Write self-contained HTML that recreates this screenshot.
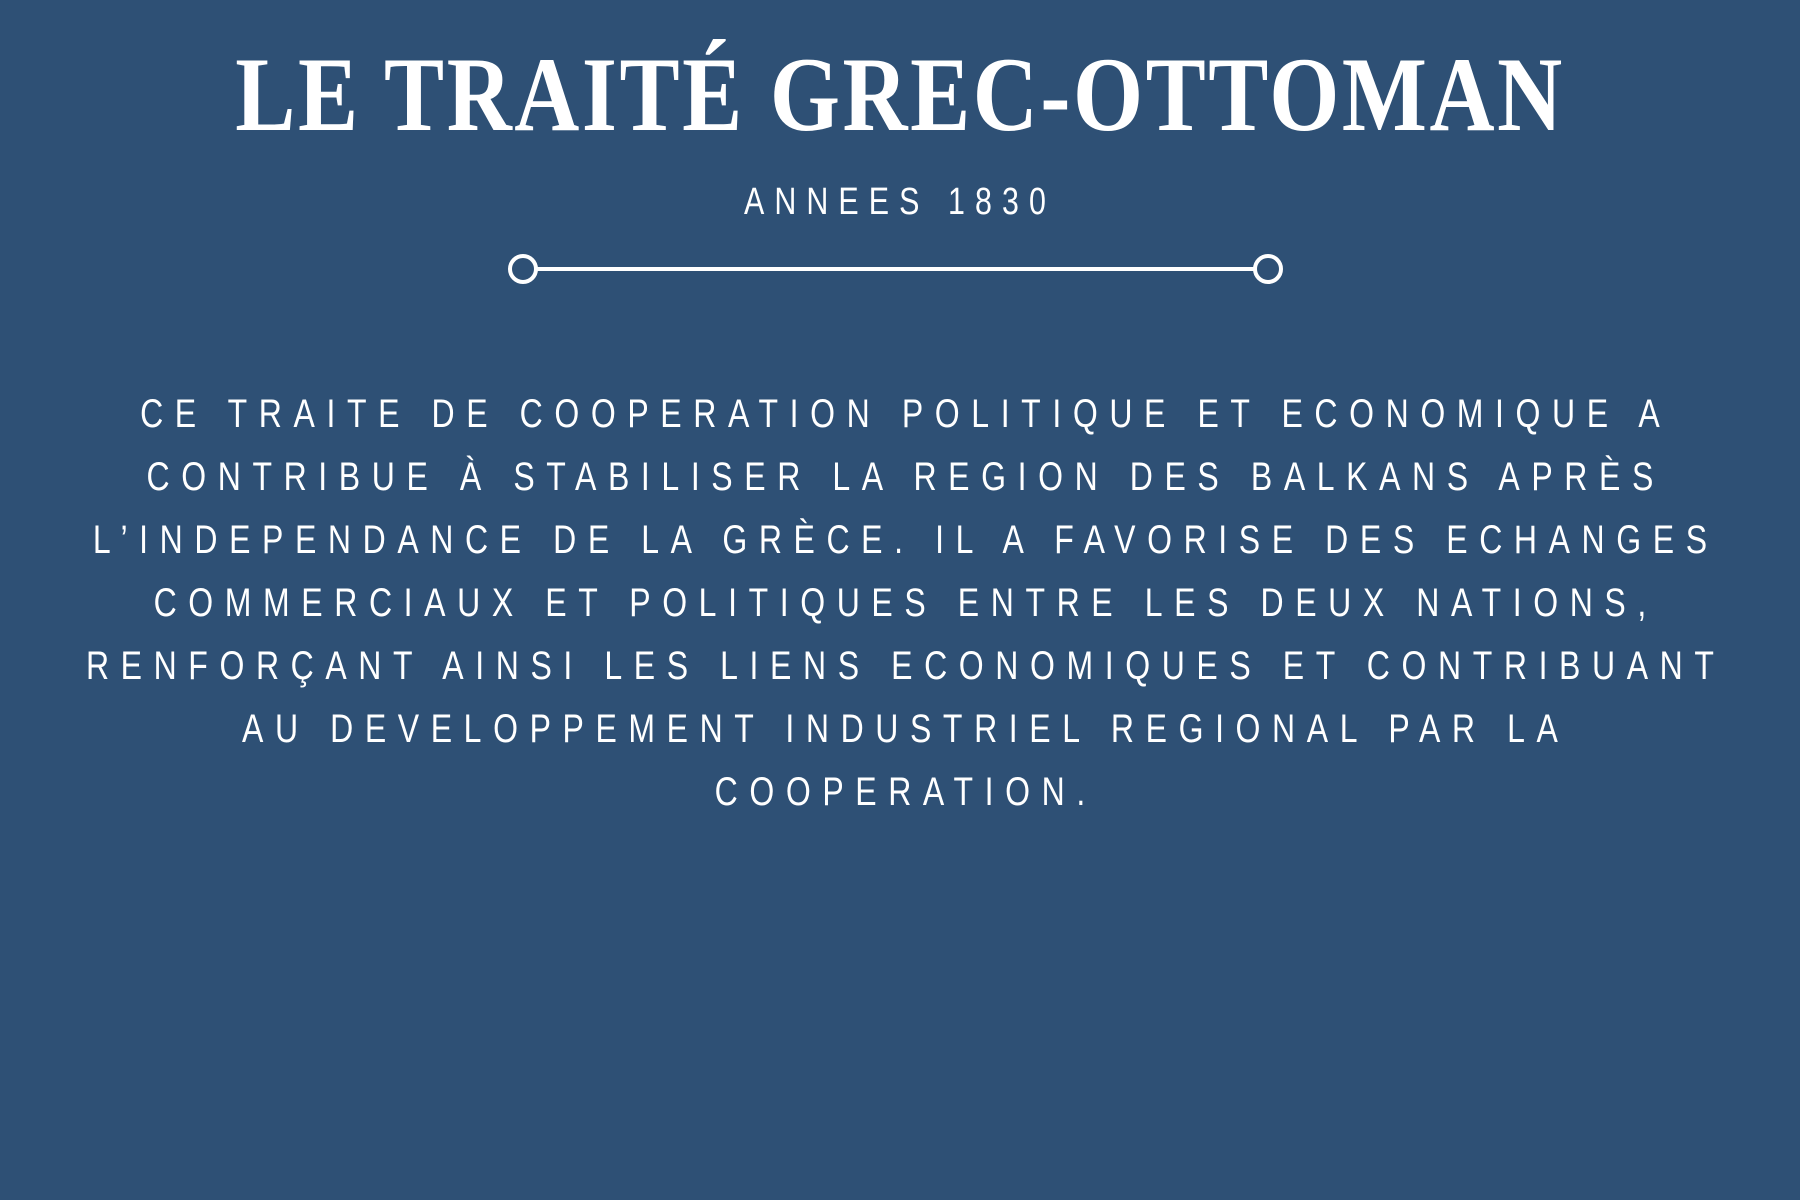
<!DOCTYPE html>
<html><head><meta charset="utf-8"><style>
html,body{margin:0;padding:0}
body{width:1800px;height:1200px;background:#2e5075;position:relative;overflow:hidden;color:#fff}
.t{position:absolute;left:-300px;width:2400px;text-align:center;white-space:nowrap}
#title{top:42px;font:bold 106px/106px "Liberation Serif",serif;}
#title span{display:inline-block;transform:scaleX(0.85);letter-spacing:3px}
#sub{top:183px;font:38px/38px "Liberation Sans",sans-serif}
#sub span{display:inline-block;transform:scaleX(0.8);letter-spacing:12.6px}
#body{top:383px;left:-294px;font:40px/63px "Liberation Sans",sans-serif}
#body .in{display:inline-block;transform:scaleX(0.8);letter-spacing:14.5px}
</style></head><body>
<div class="t" id="title"><span>LE TRAITÉ GREC-OTTOMAN</span></div>
<div class="t" id="sub"><span>ANNEES 1830</span></div>
<svg style="position:absolute;left:0;top:0" width="1800" height="300">
<line x1="537" y1="269" x2="1254" y2="269" stroke="#fff" stroke-width="4"/>
<circle cx="523" cy="269" r="13" fill="none" stroke="#fff" stroke-width="4"/>
<circle cx="1268" cy="269" r="13" fill="none" stroke="#fff" stroke-width="4"/>
</svg>
<div class="t" id="body"><div class="in">CE TRAITE DE COOPERATION POLITIQUE ET ECONOMIQUE A<br>CONTRIBUE À STABILISER LA REGION DES BALKANS APRÈS<br>L’INDEPENDANCE DE LA GRÈCE. IL A FAVORISE DES ECHANGES<br>COMMERCIAUX ET POLITIQUES ENTRE LES DEUX NATIONS,<br>RENFORÇANT AINSI LES LIENS ECONOMIQUES ET CONTRIBUANT<br>AU DEVELOPPEMENT INDUSTRIEL REGIONAL PAR LA<br>COOPERATION.</div></div>
</body></html>
